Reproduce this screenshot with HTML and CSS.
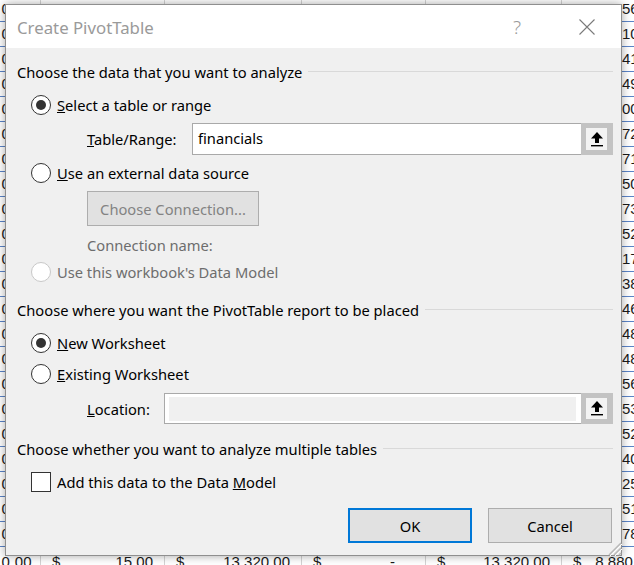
FILE: index.html
```html
<!DOCTYPE html>
<html>
<head>
<meta charset="utf-8">
<link rel="stylesheet" href="styles.css">
</head>
<body>
<div class="sheet">
  <div class="row"><div class="c c0">0.00</div><div class="c"></div><div class="c"></div><div class="c"></div><div class="c"></div><div class="c c5"><span class="tail">56.00</span></div></div>
  <div class="row"><div class="c c0">0.00</div><div class="c"></div><div class="c"></div><div class="c"></div><div class="c"></div><div class="c c5"><span class="tail">10.00</span></div></div>
  <div class="row"><div class="c c0">0.00</div><div class="c"></div><div class="c"></div><div class="c"></div><div class="c"></div><div class="c c5"><span class="tail">41.00</span></div></div>
  <div class="row"><div class="c c0">0.00</div><div class="c"></div><div class="c"></div><div class="c"></div><div class="c"></div><div class="c c5"><span class="tail">49.00</span></div></div>
  <div class="row"><div class="c c0">0.00</div><div class="c"></div><div class="c"></div><div class="c"></div><div class="c"></div><div class="c c5"><span class="tail">00.00</span></div></div>
  <div class="row"><div class="c c0">0.00</div><div class="c"></div><div class="c"></div><div class="c"></div><div class="c"></div><div class="c c5"><span class="tail">72.00</span></div></div>
  <div class="row"><div class="c c0">0.00</div><div class="c"></div><div class="c"></div><div class="c"></div><div class="c"></div><div class="c c5"><span class="tail">71.00</span></div></div>
  <div class="row"><div class="c c0">0.00</div><div class="c"></div><div class="c"></div><div class="c"></div><div class="c"></div><div class="c c5"><span class="tail">50.00</span></div></div>
  <div class="row"><div class="c c0">0.00</div><div class="c"></div><div class="c"></div><div class="c"></div><div class="c"></div><div class="c c5"><span class="tail">73.00</span></div></div>
  <div class="row"><div class="c c0">0.00</div><div class="c"></div><div class="c"></div><div class="c"></div><div class="c"></div><div class="c c5"><span class="tail">52.00</span></div></div>
  <div class="row"><div class="c c0">0.00</div><div class="c"></div><div class="c"></div><div class="c"></div><div class="c"></div><div class="c c5"><span class="tail">17.00</span></div></div>
  <div class="row"><div class="c c0">0.00</div><div class="c"></div><div class="c"></div><div class="c"></div><div class="c"></div><div class="c c5"><span class="tail">38.00</span></div></div>
  <div class="row"><div class="c c0">0.00</div><div class="c"></div><div class="c"></div><div class="c"></div><div class="c"></div><div class="c c5"><span class="tail">46.00</span></div></div>
  <div class="row"><div class="c c0">0.00</div><div class="c"></div><div class="c"></div><div class="c"></div><div class="c"></div><div class="c c5"><span class="tail">48.00</span></div></div>
  <div class="row"><div class="c c0">0.00</div><div class="c"></div><div class="c"></div><div class="c"></div><div class="c"></div><div class="c c5"><span class="tail">48.00</span></div></div>
  <div class="row"><div class="c c0">0.00</div><div class="c"></div><div class="c"></div><div class="c"></div><div class="c"></div><div class="c c5"><span class="tail">56.00</span></div></div>
  <div class="row"><div class="c c0">0.00</div><div class="c"></div><div class="c"></div><div class="c"></div><div class="c"></div><div class="c c5"><span class="tail">53.00</span></div></div>
  <div class="row"><div class="c c0">0.00</div><div class="c"></div><div class="c"></div><div class="c"></div><div class="c"></div><div class="c c5"><span class="tail">52.00</span></div></div>
  <div class="row"><div class="c c0">0.00</div><div class="c"></div><div class="c"></div><div class="c"></div><div class="c"></div><div class="c c5"><span class="tail">40.00</span></div></div>
  <div class="row"><div class="c c0">0.00</div><div class="c"></div><div class="c"></div><div class="c"></div><div class="c"></div><div class="c c5"><span class="tail">25.00</span></div></div>
  <div class="row"><div class="c c0">0.00</div><div class="c"></div><div class="c"></div><div class="c"></div><div class="c"></div><div class="c c5"><span class="tail">51.00</span></div></div>
  <div class="row"><div class="c c0">0.00</div><div class="c"></div><div class="c"></div><div class="c"></div><div class="c"></div><div class="c c5"><span class="tail">78.00</span></div></div>
  <div class="row last">
    <div class="c c0">0.00</div>
    <div class="c money"><span>$</span><span>15.00</span></div>
    <div class="c money"><span>$</span><span>13,320.00</span></div>
    <div class="c money dash"><span>$</span><span>-</span></div>
    <div class="c money"><span>$</span><span>13,320.00</span></div>
    <div class="c money end"><span>$</span><span>8,880.00</span></div>
  </div>
</div>

<div class="dialog">
  <div class="titlebar">
    <span class="title">Create PivotTable</span>
    <span class="help">?</span>
    <span class="close">
      <svg width="16" height="16" viewBox="0 0 16 16"><path d="M0.5 0.5 L15.5 15.5 M15.5 0.5 L0.5 15.5" stroke="#7a7a7a" stroke-width="1.1" fill="none"/></svg>
    </span>
  </div>
  <div class="body">
    <div class="group g1"><span>Choose the data that you want to analyze</span></div>

    <div class="opt r1"><span class="radio on"></span><span><u>S</u>elect a table or range</span></div>

    <div class="field f1">
      <span class="flabel"><u>T</u>able/Range:</span>
      <div class="input">
        <span class="val">financials</span>
        <span class="pick">
          <svg width="14" height="15" viewBox="0 0 14 15"><path d="M7 0 L13 6.5 L9 6.5 L9 11 L5 11 L5 6.5 L1 6.5 Z" fill="#000"/><rect x="1" y="13" width="12" height="1.4" fill="#000"/></svg>
        </span>
      </div>
    </div>

    <div class="opt r2"><span class="radio"></span><span><u>U</u>se an external data source</span></div>

    <div class="connrow"><span class="connbtn">Choose Connection...</span></div>

    <div class="connname">Connection name:</div>

    <div class="opt r3 disabled"><span class="radio"></span><span>Use this workbook's Data Model</span></div>

    <div class="group g2"><span>Choose where you want the PivotTable report to be placed</span></div>

    <div class="opt r4"><span class="radio on"></span><span><u>N</u>ew Worksheet</span></div>
    <div class="opt r5"><span class="radio"></span><span><u>E</u>xisting Worksheet</span></div>

    <div class="field f2">
      <span class="flabel loc"><u>L</u>ocation:</span>
      <div class="input dis">
        <span class="val"></span>
        <span class="pick">
          <svg width="14" height="15" viewBox="0 0 14 15"><path d="M7 0 L13 6.5 L9 6.5 L9 11 L5 11 L5 6.5 L1 6.5 Z" fill="#000"/><rect x="1" y="13" width="12" height="1.4" fill="#000"/></svg>
        </span>
      </div>
    </div>

    <div class="group g3"><span>Choose whether you want to analyze multiple tables</span></div>

    <div class="opt r6"><span class="check"></span><span>Add this data to the Data <u>M</u>odel</span></div>

    <div class="buttons">
      <span class="btn ok">OK</span>
      <span class="btn">Cancel</span>
    </div>
  </div>
  <svg class="grip" width="18" height="18" viewBox="0 0 18 18">
    <path d="M17 5 L5 17 M17 10 L10 17 M17 15 L15 17" stroke="#b8b8b8" stroke-width="1.5" fill="none"/>
    <path d="M18 6 L6 18 M18 11 L11 18" stroke="#ffffff" stroke-width="1" fill="none"/>
  </svg>
</div>
</body>
</html>
```

FILE: styles.css
```css
html, body {
  margin: 0;
  padding: 0;
  background: #ffffff;
  overflow: hidden;
  width: 634px;
  height: 565px;
}

.sheet {
  margin-top: -3px;
  font-family: "Liberation Sans", Arial, sans-serif;
  font-size: 15px;
  color: #1a1a1a;
}

.row {
  display: grid;
  grid-template-columns: 41px 124px 137px 124px 136px 80px;
  height: 25px;
  box-sizing: border-box;
  border-bottom: 1px solid #5b84c8;
}

.row.last {
  border-bottom: none;
  padding-top: 3px;
}

.c {
  border-right: 1px solid #d4d4d4;
  line-height: 24px;
  white-space: nowrap;
  overflow: hidden;
}

.c0 {
  text-align: right;
  padding-right: 8px;
  letter-spacing: 0.3px;
}

.c5 {
  border-right: none;
}

.tail {
  display: inline-block;
  padding-left: 60px;
}

.money {
  display: flex;
  justify-content: space-between;
  padding: 0 11px 0 11px;
}

.money.dash {
  padding-right: 30px;
}

.money.end {
  justify-content: flex-start;
  gap: 14px;
  border-right: none;
}

/* ---------- Dialog ---------- */
.dialog {
  position: absolute;
  left: 5px;
  top: 4px;
  width: 617px;
  height: 552px;
  box-sizing: border-box;
  border: 1px solid #8f8f8f;
  background: #f0f0f0;
  box-shadow: 0 0 9px rgba(0, 0, 0, 0.35);
  font-family: "Noto Sans", "Open Sans", sans-serif;
  font-size: 14.7px;
  color: #000000;
  display: flex;
  flex-direction: column;
}

.titlebar {
  height: 43px;
  background: #ffffff;
  display: flex;
  align-items: center;
  padding: 0 11px 0 11px;
  flex-shrink: 0;
}

.title {
  font-size: 16.8px;
  color: #9a9a9a;
  margin-top: 1px;
}

.help {
  margin-left: auto;
  width: 30px;
  text-align: center;
  font-size: 19px;
  color: #9a9a9a;
  font-weight: 300;
}

.close {
  width: 46px;
  margin-left: 32px;
  display: flex;
  justify-content: center;
  align-items: center;
}

.body {
  padding: 12px 8px 0 11px;
  display: flex;
  flex-direction: column;
}

.group {
  height: 24px;
  display: flex;
  align-items: center;
}

.group::after {
  content: "";
  flex: 1;
  border-top: 1px solid #d9d9d9;
  margin-left: 6px;
  margin-top: -1px;
}

.opt {
  height: 24px;
  display: flex;
  align-items: center;
  padding-left: 14px;
  gap: 6px;
}

.radio {
  width: 20px;
  height: 20px;
  box-sizing: border-box;
  border: 1px solid #333333;
  border-radius: 50%;
  background: #ffffff;
  display: flex;
  align-items: center;
  justify-content: center;
  flex-shrink: 0;
}

.radio.on::after {
  content: "";
  width: 10px;
  height: 10px;
  border-radius: 50%;
  background: #333333;
}

.check {
  width: 20px;
  height: 20px;
  box-sizing: border-box;
  border: 1px solid #333333;
  background: #ffffff;
  flex-shrink: 0;
}

.disabled {
  color: #6d6d6d;
}

.disabled .radio {
  border-color: #c8c8c8;
}

.r1 { margin-top: 9px; }
.f1 { margin-top: 6px; }
.r2 { margin-top: 6px; }
.connrow { margin-top: 6px; padding-left: 70px; display: flex; }
.connname { margin-top: 7px; padding-left: 70px; height: 24px; line-height: 24px; color: #6d6d6d; }
.r3 { margin-top: 3px; }
.g2 { margin-top: 14px; }
.r4 { margin-top: 9px; }
.r5 { margin-top: 7px; }
.f2 { margin-top: 7px; }
.g3 { margin-top: 13px; }
.r6 { margin-top: 9px; }

.field {
  display: flex;
  align-items: center;
  padding-left: 70px;
}

.flabel {
  width: 105px;
  flex-shrink: 0;
}

.flabel.loc {
  width: 77px;
}

.input {
  flex: 1;
  height: 32px;
  box-sizing: border-box;
  border: 1px solid #a9a9a9;
  background: #ffffff;
  display: flex;
  align-items: stretch;
}

.input .val {
  flex: 1;
  padding-left: 5px;
  line-height: 29px;
}

.input.dis {
  height: 31px;
}

.input.dis .val {
  margin: 3px 5px 2px 4px;
  padding: 0;
  background: #f0f0f0;
}

.pick {
  width: 32px;
  box-sizing: border-box;
  border: 5px solid #c3c3c3;
  border-right-width: 6px;
  background: #f3f3f3;
  display: flex;
  align-items: center;
  justify-content: center;
  margin: -1px -1px -1px 0;
}

.connbtn {
  width: 172px;
  height: 35px;
  box-sizing: border-box;
  border: 1px solid #adadad;
  background: #e1e1e1;
  color: #838383;
  display: flex;
  align-items: center;
  justify-content: center;
}

.buttons {
  margin-top: 14px;
  display: flex;
  justify-content: flex-end;
  gap: 16px;
  padding-right: 1px;
}

.btn {
  width: 124px;
  height: 35px;
  box-sizing: border-box;
  border: 1px solid #adadad;
  background: #e1e1e1;
  display: flex;
  align-items: center;
  justify-content: center;
}

.btn.ok {
  border: 2px solid #0078d7;
}

.grip {
  position: absolute;
  right: -1px;
  bottom: -1px;
}
```
